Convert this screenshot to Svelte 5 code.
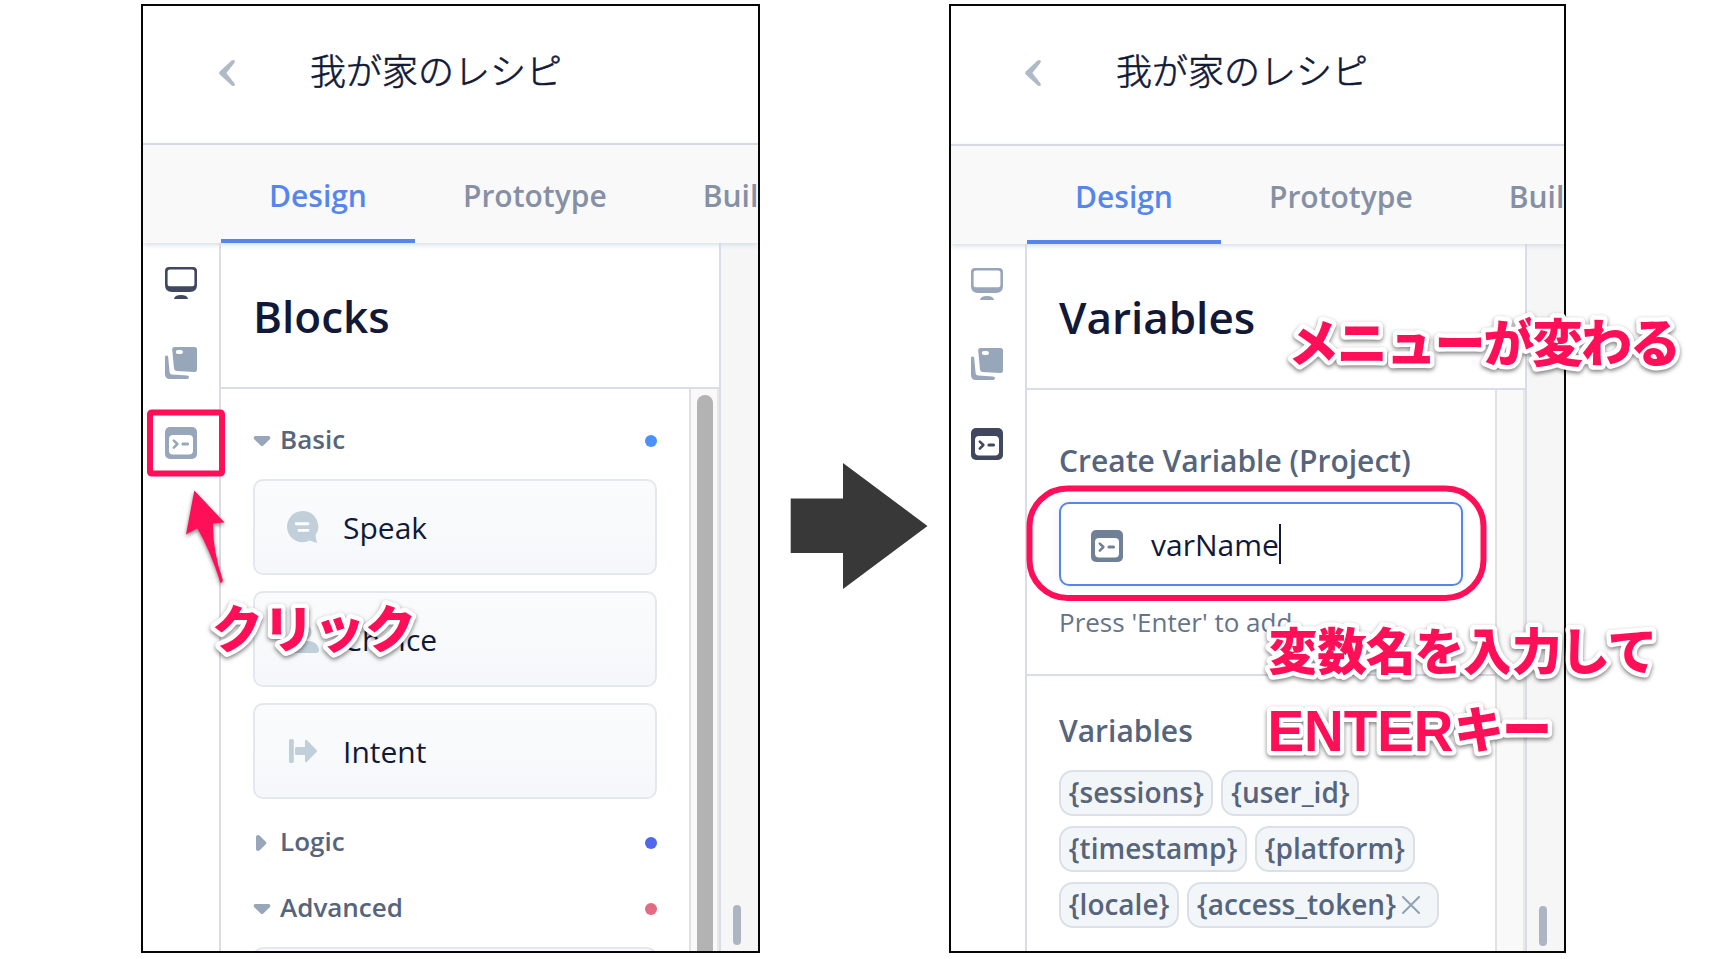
<script>
  const blocks = ['Speak', 'Choice', 'Intent'];
  const rows = [['{sessions}', '{user_id}'], ['{timestamp}', '{platform}'], ['{locale}', '{access_token}']];
</script>

{#snippet monitor()}
  <svg class="ic" viewBox="0 0 32 32" fill="currentColor">
    <path fill-rule="evenodd" d="M4 0H28Q32 0 32 4V18Q32 25 25 25H7Q0 25 0 18V4Q0 0 4 0ZM5 2.4Q2.6 2.4 2.6 4.6V17.2Q2.6 19.2 4.6 19.2H27.4Q29.4 19.2 29.4 17.2V4.6Q29.4 2.4 27 2.4Z" />
    <path d="M9 31.9Q9.5 28 16 28T23 31.9Z" />
  </svg>
{/snippet}

{#snippet layers()}
  <svg class="ic" viewBox="0 0 32 32" fill="currentColor">
    <path fill-rule="evenodd" d="M9.5 0H29.5Q32 0 32 2.5V22.5Q32 25.2 29.3 25L11.5 24Q9.2 23.8 9 21.5L7.2 2.5Q7 0 9.5 0ZM13 3Q10.8 3 10.8 5T13 7H15.8Q18 7 18 5T15.8 3Z" />
    <path d="M0 10Q0 8.6 1.6 8.6Q3 8.6 3.2 10L4.6 25.2Q4.8 27.2 6.8 27.4L22 28.6Q24 28.8 24 30.3T22 32H5Q0 32 0 27Z" />
  </svg>
{/snippet}

{#snippet terminal()}
  <svg class="ic" viewBox="0 0 32 32">
    <rect width="32" height="32" rx="5" fill="currentColor" />
    <rect x="4" y="8" width="24" height="19.5" rx="4" fill="#fff" />
    <path d="M8.800 13.600L12.400 17L8.800 20.600" fill="none" stroke="currentColor" stroke-width="2.5" stroke-linecap="round" stroke-linejoin="round" />
    <path d="M18 17H22.500" stroke="currentColor" stroke-width="3.2" stroke-linecap="round" />
  </svg>
{/snippet}

{#snippet top()}
  <header>
    <svg class="back" viewBox="0 0 16 26"><path d="M12.6.6Q14.4-.6 15.7.6V2.4L7.4 13L15.7 23.8V25.4Q14.4 26.4 12.8 25.4L.8 14.4Q-.4 13 .8 11.6Z" fill="#aebac6" /></svg>
    <h1>我が家のレシピ</h1>
  </header>
  <nav>
    <span class="tab on">Design</span><span class="tab">Prototype</span><span class="tab">Build</span>
  </nav>
{/snippet}

<div class="stage">
  <section class="frame first">
    {@render top()}
    <div class="body">
      <aside>
        <i class="active">{@render monitor()}</i>
        <i>{@render layers()}</i>
        <i>{@render terminal()}</i>
      </aside>
      <div class="panel">
        <h2>Blocks</h2>
        <div class="scroller">
          <div class="list">
            <div class="group">
              <svg class="tri" viewBox="0 0 18 16"><path d="M2 3H16Q18 4 17 6L10.3 12.6Q9 13.8 7.7 12.6L1 6Q0 4 2 3Z" /></svg>
              <b>Basic</b><em class="dot blue"></em>
            </div>
            <div class="cards">
              {#each blocks as name}
                <div class="card">
                  <svg class="ic" viewBox="0 0 32 32" fill="#c0cfda">
                    {#if name === 'Speak'}
                      <path d="M15.6 0A15.6 15.6 0 0 1 28.4 24.6L30 32L22.5 29.6A15.6 15.6 0 1 1 15.6 0Z" />
                      <path d="M9.2 12.8H21M12 19.4H21" stroke="#fff" stroke-width="2.9" stroke-linecap="round" />
                    {:else if name === 'Choice'}
                      <circle cx="16" cy="9" r="8.5" />
                      <path d="M1 28Q1 18 12 18H20Q31 18 32 27Q32 30 29 30H3Q1 30 1 28Z" />
                    {:else}
                      <rect x="2" y="4" width="4.8" height="24" rx="1.5" />
                      <path d="M9.6 12H18V6Q18 4 20 5.2L29.6 15Q30.6 16 29.6 17L20 26.8Q18 28 18 26V20H9.6Q8 20 8 18.4V13.6Q8 12 9.6 12Z" />
                    {/if}
                  </svg>
                  <span>{name}</span>
                </div>
              {/each}
            </div>
            <div class="group">
              <svg class="tri" viewBox="0 0 18 16"><path d="M3 2Q3 0 5 0Q6 0 7 1L13 7Q14 8 13 9L7 15Q6 16 5 16Q3 16 3 14Z" /></svg>
              <b>Logic</b><em class="dot indigo"></em>
            </div>
            <div class="group">
              <svg class="tri" viewBox="0 0 18 16"><path d="M2 3H16Q18 4 17 6L10.3 12.6Q9 13.8 7.7 12.6L1 6Q0 4 2 3Z" /></svg>
              <b>Advanced</b><em class="dot rose"></em>
            </div>
            <div class="cards"><div class="card"></div></div>
          </div>
          <div class="gutter"><div class="thumb"></div></div>
        </div>
      </div>
      <div class="canvas"><div class="grip"></div></div>
    </div>
  </section>

  <div class="between">
    <svg width="138" height="126" viewBox="0 0 138 126"><path d="M.7 35.500H53V0L137.500 63L53 126V90H.7Z" fill="#383838" /></svg>
  </div>

  <section class="frame second">
    {@render top()}
    <div class="body">
      <aside>
        <i>{@render monitor()}</i>
        <i>{@render layers()}</i>
        <i class="active">{@render terminal()}</i>
      </aside>
      <div class="panel">
        <h2>Variables</h2>
        <div class="scroller">
          <div class="list">
            <div class="create">
              <h3>Create Variable (Project)</h3>
              <div class="input"><i>{@render terminal()}</i><span>varName</span><u></u></div>
              <p>Press 'Enter' to add</p>
            </div>
            <div class="vars">
              <h3>Variables</h3>
              {#each rows as row}
                <div class="row">
                  {#each row as name}
                    <span class="chip">{name}{#if name === '{access_token}'}<svg width="18" height="18" viewBox="0 0 18 18"><path d="M1 1L17 17M17 1L1 17" stroke="#8da2b5" stroke-width="2" stroke-linecap="round" /></svg>{/if}</span>
                  {/each}
                </div>
              {/each}
            </div>
          </div>
          <div class="gutter"></div>
        </div>
      </div>
      <div class="canvas"><div class="grip"></div></div>
    </div>
  </section>

  <svg class="notes" width="1709" height="959" viewBox="0 0 1709 959">
    <rect x="150" y="412.500" width="72" height="61" rx="1.500" fill="none" stroke="#ff0f58" stroke-width="6" />
    <rect x="1029.500" y="488.500" width="454" height="109.500" rx="38" fill="none" stroke="#ff0f58" stroke-width="6" />
    <g class="shade">
      <path d="M194.300 490.500L224.500 522.500L213 523.300Q212.500 550 222.800 580Q222.500 583.500 220.500 583Q210 550 197.300 528.300L186 534.500Z" fill="#ff0f58" />
    </g>
    <g class="shade words">
      <text x="212" y="648" font-size="51" textLength="204">クリック</text>
      <text x="1288" y="361.500" font-size="51" textLength="393">メニューが変わる</text>
      <text x="1268.500" y="670" textLength="389">変数名を入力して</text>
      <text class="latin" x="1267.500" y="750.500" textLength="186" lengthAdjust="spacingAndGlyphs">ENTER</text>
      <text x="1454" y="748" textLength="98">キー</text>
    </g>
  </svg>
</div>

<style>
  :global(body) { margin: 0; background: #fff; overflow: hidden; }
  .stage {
    position: relative; width: 1709px; height: 959px; box-sizing: border-box;
    padding: 4px 0 6px 141px; display: flex; overflow: hidden;
    font-family: "Open Sans", "Noto Sans CJK JP", sans-serif; color: #111937;
  }
  .stage :global(*) { box-sizing: border-box; }
  h1, h2, h3, p { margin: 0; }
  i, em, u { font-style: normal; text-decoration: none; display: block; }
  .frame { width: 619px; height: 949px; border: 2px solid #060606; overflow: hidden; display: flex; flex-direction: column; flex: none; }
  .second { width: 617px; }
  header { height: 139px; flex: none; border-bottom: 2px solid #d9dce8; display: flex; align-items: center; padding-left: 76px; }
  .second header { height: 140px; padding-left: 74px; }
  .back { width: 16px; height: 26px; margin-top: -4px; }
  h1 { font: 300 36px/50px "Noto Sans CJK JP", sans-serif; margin: -12px 0 0 75px; white-space: nowrap; -webkit-text-stroke: 0.6px #111937; }
  nav { height: 98px; flex: none; background: #f9f9f9; display: flex; padding-left: 78px; position: relative; box-shadow: 0 1px 6px #cbd4df; z-index: 1; }
  .second nav { padding-left: 76px; }
  .tab { flex: none; padding: 3px 48px 0; line-height: 96px; font-size: 30px; font-weight: 600; color: #8690a4; }
  .tab.on { color: #5686eb; box-shadow: inset 0 -4px #5686eb; }
  .body { flex: 1; min-height: 0; display: flex; }
  aside { width: 78px; flex: none; border-right: 2px solid #dadde9; padding: 24px 0 0 22px; display: flex; flex-direction: column; gap: 48px; color: #97a6b8; }
  .second aside { width: 76px; padding-left: 20px; }
  .active { color: #40475f; }
  .ic { display: block; width: 32px; height: 32px; flex: none; }
  aside i { height: 32px; }
  .panel { width: 500px; flex: none; border-right: 2px solid #d9dde9; display: flex; flex-direction: column; }
  h2 { height: 146px; flex: none; border-bottom: 2px solid #d9dde9; padding: 1px 0 0 32px; font-size: 44px; font-weight: 600; line-height: 144px; }
  .scroller { flex: 1; min-height: 0; display: flex; }
  .list { flex: 1; overflow: hidden; padding-top: 19px; }
  .gutter { width: 30px; flex: none; border-left: 2px solid #e1e1e1; border-right: 2px solid #e8e8e8; background: #f9f9f9; padding: 6px 4px 0 6px; }
  .thumb { width: 16px; height: 600px; border-radius: 8px; background: #b3b3b3; }
  .canvas { flex: 1; background: #f6f6f7; padding-left: 12px; display: flex; align-items: flex-end; padding-bottom: 6px; }
  .second .canvas { padding-bottom: 5px; }
  .grip { width: 8px; height: 40px; border-radius: 4px; background: #acb6c2; }
  .group { height: 66px; display: flex; align-items: center; padding: 0 32px; color: #56647c; }
  .tri { width: 18px; height: 16px; fill: #97a6b8; }
  .group b { font-size: 26px; font-weight: 600; margin: -5px 0 0 9px; line-height: 36px; flex: 1; }
  .dot { width: 12px; height: 12px; border-radius: 50%; }
  .blue { background: #4a91fa; }
  .indigo { background: #5167ee; }
  .rose { background: #e26a81; }
  .cards { padding: 5px 32px 11px; display: flex; flex-direction: column; gap: 16px; }
  .card { height: 96px; border: 2px solid #e3e8ef; border-radius: 10px; background: linear-gradient(#fafbfc, #f5f8fa); display: flex; align-items: center; gap: 24px; padding-left: 32px; font-size: 30px; line-height: 42px; }
  .card span { margin-top: 2px; }
  .between { width: 189px; flex: none; padding: 459px 0 0 30px; }
  .second .list { padding: 0; }
  .create { height: 286px; border-bottom: 2px solid #d9dde9; padding: 50px 32px 0; }
  h3 { font-size: 30px; font-weight: 600; color: #56647c; line-height: 41px; white-space: nowrap; }
  .input { height: 84px; width: 404px; margin-top: 21px; border: 2px solid #5686eb; border-radius: 10px; display: flex; align-items: center; padding: 4px 0 0 30px; font-size: 30px; line-height: 40px; box-shadow: 0 0 8px #e8edf5; }
  .input i { color: #708097; }
  .input span { margin: -3px 0 0 28px; }
  .input u { width: 2px; height: 40px; background: #111937; margin-top: -4px; }
  .create p { font-size: 26px; line-height: 36px; color: #66748a; margin-top: 18px; white-space: nowrap; }
  .vars { padding: 34px 32px; }
  .vars h3 { margin-bottom: 19px; }
  .row { display: flex; gap: 8px; margin-bottom: 10px; }
  .chip { height: 46px; border: 2px solid #dbe0e8; border-radius: 14px; background: #f3f6f8; color: #56647c; font-size: 28px; font-weight: 600; line-height: 40px; padding: 0 7.800px; display: flex; white-space: nowrap; }
  .chip svg { margin: 12px 8.500px 0 6.500px; }
  .notes { position: absolute; left: 0; top: 0; z-index: 3; }
  .shade { filter: drop-shadow(0 2px 2px rgba(0, 0, 0, 0.5)); }
  .words { font-family: "Noto Sans CJK JP", sans-serif; font-size: 50px; font-weight: 900; fill: #ff0f58; stroke: #fff; stroke-width: 9px; stroke-linejoin: round; paint-order: stroke; }
  .latin { font-family: "Liberation Sans", sans-serif; font-size: 58px; font-weight: 700; }
</style>
